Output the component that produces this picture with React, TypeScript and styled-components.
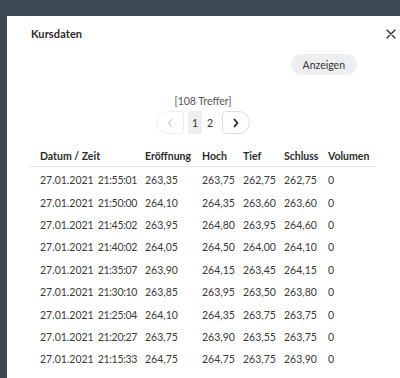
import React from 'react'
import styled, { createGlobalStyle } from 'styled-components'

type Row = {
  date: string
  time: string
  open: string
  high: string
  low: string
  close: string
  volume: string
}

const rows: Row[] = [
  { date: '27.01.2021', time: '21:55:01', open: '263,35', high: '263,75', low: '262,75', close: '262,75', volume: '0' },
  { date: '27.01.2021', time: '21:50:00', open: '264,10', high: '264,35', low: '263,60', close: '263,60', volume: '0' },
  { date: '27.01.2021', time: '21:45:02', open: '263,95', high: '264,80', low: '263,95', close: '264,60', volume: '0' },
  { date: '27.01.2021', time: '21:40:02', open: '264,05', high: '264,50', low: '264,00', close: '264,10', volume: '0' },
  { date: '27.01.2021', time: '21:35:07', open: '263,90', high: '264,15', low: '263,45', close: '264,15', volume: '0' },
  { date: '27.01.2021', time: '21:30:10', open: '263,85', high: '263,95', low: '263,50', close: '263,80', volume: '0' },
  { date: '27.01.2021', time: '21:25:04', open: '264,10', high: '264,35', low: '263,75', close: '263,75', volume: '0' },
  { date: '27.01.2021', time: '21:20:27', open: '263,75', high: '263,90', low: '263,55', close: '263,75', volume: '0' },
  { date: '27.01.2021', time: '21:15:33', open: '264,75', high: '264,75', low: '263,75', close: '263,90', volume: '0' },
]

const colWidths = [105, 57, 41, 41, 44, 58]

const GlobalStyle = createGlobalStyle`
  html, body {
    margin: 0;
    padding: 0;
    height: 100%;
    overflow: hidden;
    background: #3b4a52;
    font-family: Lato, "Open Sans", sans-serif;
  }
`

const StyledBackdrop = styled.div`
  width: 400px;
  height: 378px;
  overflow: hidden;
  padding: 16px 0 0 7px;
  box-sizing: border-box;
`

const StyledModal = styled.div`
  position: relative;
  width: 420px;
  height: 400px;
  background: #ffffff;
  padding: 0 0 0 23px;
  box-sizing: border-box;
  display: flex;
  flex-direction: column;
`

const StyledContent = styled.div`
  width: 346px;
  display: flex;
  flex-direction: column;
`

const StyledTitle = styled.h2`
  margin: 0;
  padding: 11px 0 0 1px;
  height: 24px;
  box-sizing: border-box;
  font-size: 11px;
  font-weight: 700;
  color: #2b2b2b;
  letter-spacing: 0.1px;
`

const StyledClose = styled.button`
  position: absolute;
  top: 11px;
  left: 377px;
  width: 14px;
  height: 14px;
  padding: 0;
  border: 0;
  background: none;
  display: flex;
  align-items: center;
  justify-content: center;
`

const StyledToolbar = styled.div`
  display: flex;
  justify-content: flex-end;
  padding: 14px 19px 0 0;
`

const StyledShowButton = styled.button`
  height: 21px;
  padding: 0 12px;
  border: 0;
  border-radius: 11px;
  background: #eceeef;
  font-family: inherit;
  font-size: 10.5px;
  color: #333;
`

const StyledHits = styled.div`
  margin-top: 19px;
  text-align: center;
  font-size: 10.5px;
  color: #555;
  line-height: 14px;
`

const StyledPager = styled.div`
  margin-top: 3px;
  display: flex;
  justify-content: center;
  align-items: center;
`

const StyledArrow = styled.button<{ $side: 'prev' | 'next'; $disabled?: boolean }>`
  width: 28px;
  height: 23px;
  padding: 0;
  margin: ${(p) => (p.$side === 'prev' ? '0 4px 0 0' : '0 0 0 4px')};
  background: #fff;
  border: 1px solid ${(p) => (p.$disabled ? '#eeeeee' : '#dcdcdc')};
  border-radius: ${(p) => (p.$side === 'prev' ? '12px 4px 4px 12px' : '4px 12px 12px 4px')};
  display: flex;
  align-items: center;
  justify-content: center;
`

const StyledPage = styled.span<{ $active?: boolean }>`
  width: 14px;
  height: 23px;
  margin: 0 1px 0 0;
  display: flex;
  align-items: center;
  justify-content: center;
  font-size: 10.5px;
  color: #333;
  background: ${(p) => (p.$active ? '#eeeeee' : 'transparent')};
`

const StyledTable = styled.table`
  margin-top: 12px;
  width: 346px;
  border-collapse: collapse;
  table-layout: fixed;
  font-size: 10.5px;
  color: #3a3a3a;

  th {
    text-align: left;
    font-weight: 700;
    color: #2b2b2b;
    padding: 4px 0 0 10px;
    height: 16px;
    vertical-align: top;
    border-bottom: 1px solid #e6e6e6;
    white-space: nowrap;
  }

  td {
    padding: 0 0 0 10px;
    height: 22.4px;
    white-space: nowrap;
  }

  tbody tr:first-child td {
    padding-top: 2px;
  }
`

const StyledTime = styled.span`
  margin-left: 4px;
  letter-spacing: -0.3px;
`

const Chevron = ({ dir, color, width }: { dir: 'left' | 'right'; color: string; width: number }) => (
  <svg width="8" height="10" viewBox="0 0 8 10">
    <path
      d={dir === 'left' ? 'M5.5 1.5 L2.5 5 L5.5 8.5' : 'M2.5 1.5 L5.5 5 L2.5 8.5'}
      fill="none"
      stroke={color}
      strokeWidth={width}
      strokeLinecap="round"
      strokeLinejoin="round"
    />
  </svg>
)

export default function App() {
  return (
    <>
      <GlobalStyle />
      <StyledBackdrop>
        <StyledModal>
          <StyledClose aria-label="Schließen">
            <svg width="10" height="10" viewBox="0 0 10 10">
              <path d="M1 1 L9 9 M9 1 L1 9" stroke="#222" strokeWidth="1.2" strokeLinecap="round" />
            </svg>
          </StyledClose>
          <StyledContent>
            <StyledTitle>Kursdaten</StyledTitle>
            <StyledToolbar>
              <StyledShowButton>Anzeigen</StyledShowButton>
            </StyledToolbar>
            <StyledHits>[108 Treffer]</StyledHits>
            <StyledPager>
              <StyledArrow $side="prev" $disabled>
                <Chevron dir="left" color="#cfcfcf" width={1.2} />
              </StyledArrow>
              <StyledPage $active>1</StyledPage>
              <StyledPage>2</StyledPage>
              <StyledArrow $side="next">
                <Chevron dir="right" color="#222" width={1.8} />
              </StyledArrow>
            </StyledPager>
            <StyledTable>
              <colgroup>
                {colWidths.map((w, i) => (
                  <col key={i} style={{ width: w }} />
                ))}
              </colgroup>
              <thead>
                <tr>
                  <th>Datum / Zeit</th>
                  <th>Eröffnung</th>
                  <th>Hoch</th>
                  <th>Tief</th>
                  <th>Schluss</th>
                  <th>Volumen</th>
                </tr>
              </thead>
              <tbody>
                {rows.map((r) => (
                  <tr key={r.time}>
                    <td>
                      {r.date}
                      <StyledTime>{r.time}</StyledTime>
                    </td>
                    <td>{r.open}</td>
                    <td>{r.high}</td>
                    <td>{r.low}</td>
                    <td>{r.close}</td>
                    <td>{r.volume}</td>
                  </tr>
                ))}
              </tbody>
            </StyledTable>
          </StyledContent>
        </StyledModal>
      </StyledBackdrop>
    </>
  )
}
